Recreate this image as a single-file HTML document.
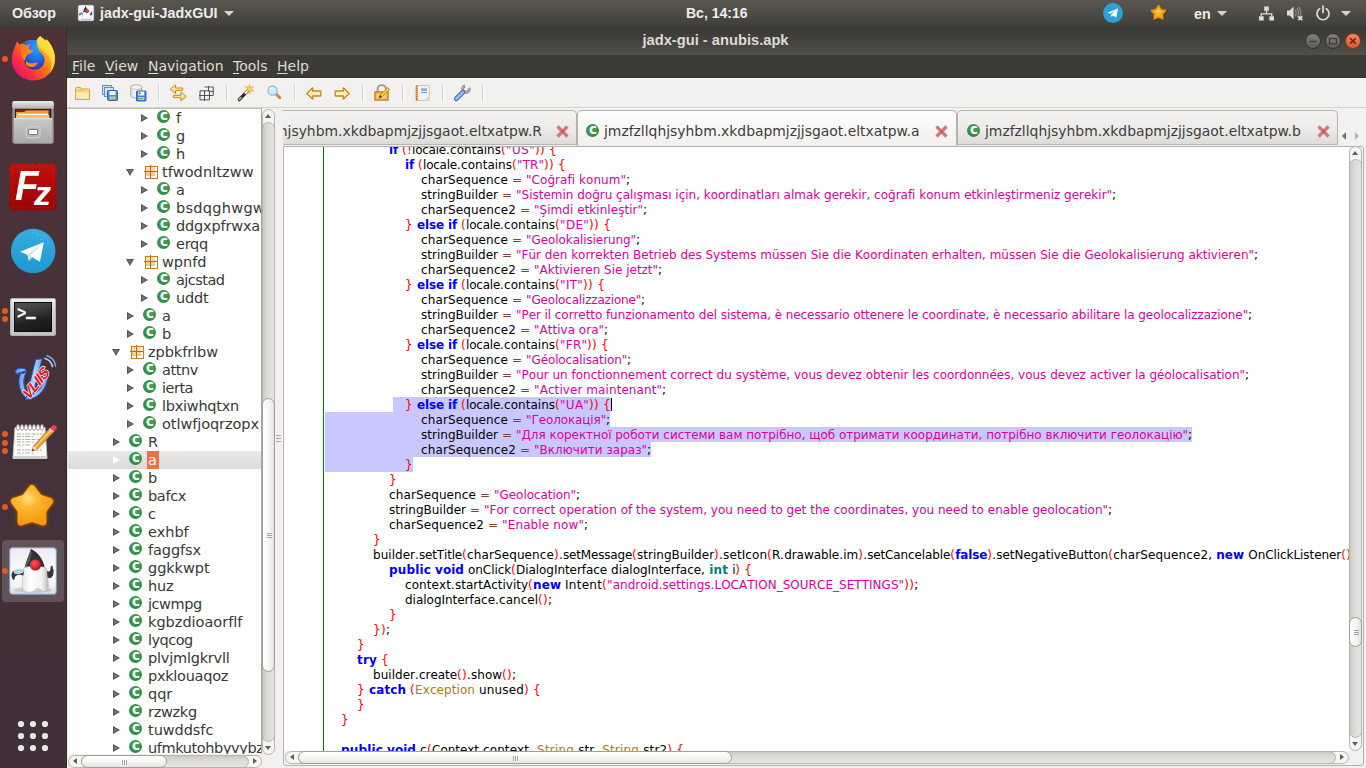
<!DOCTYPE html>
<html lang="en">
<head>
<meta charset="utf-8">
<title>jadx-gui - anubis.apk</title>
<style>
*{box-sizing:border-box;margin:0;padding:0}
html,body{width:1366px;height:768px;overflow:hidden;background:#f2f1f0}
body{position:relative;font-family:"DejaVu Sans","Liberation Sans",sans-serif;font-size:14px;color:#3c3c3c}
.abs,.abs>*{position:absolute}
svg{display:block;overflow:visible}
/* ---------- top panel ---------- */
#panel{left:0;top:0;width:1366px;height:27px;background:linear-gradient(#59574f,#514f48 35%,#45443e 75%,#3f3e39);color:#f2f1ef}
#panel .t{top:0;height:27px;line-height:26px;font-family:"Liberation Sans","DejaVu Sans",sans-serif;font-size:14.3px;font-weight:bold;white-space:nowrap;color:#eeeeec}
.caret{width:0;height:0;border-left:5px solid transparent;border-right:5px solid transparent;border-top:5px solid #d6d5d1}
/* ---------- dock ---------- */
#dock{left:0;top:27px;width:67px;height:741px;background:linear-gradient(#4d3238,#48323a 35%,#43313a 70%,#42313a);border-right:1px solid #39292d}
.dot{width:6px;height:6px;border-radius:3px;background:#e55a1f;left:2px}
/* ---------- window chrome ---------- */
#titlebar{left:67px;top:27px;width:1299px;height:28px;background:linear-gradient(#393834,#3d3c38 20%,#46453f 60%,#514f49)}
#titlebar .title{left:0;width:1299px;top:0;height:27px;line-height:26px;text-align:center;font-family:"Liberation Sans","DejaVu Sans",sans-serif;font-weight:bold;font-size:14.7px;color:#dfdbd2;text-indent:-2px}
.wb{width:16px;height:16px;border-radius:8px;top:6px;border:1px solid #32312d;background:linear-gradient(#807f79,#5e5d58)}
#menubar{left:67px;top:55px;width:1299px;height:23px;background:#3c3b37;color:#dfdbd2;border-bottom:1px solid #2f2e2b}
#menubar span{top:0;height:23px;line-height:22px;font-size:14px;white-space:nowrap}
#menubar u{text-decoration:underline;text-underline-offset:2px}
#toolbar{left:67px;top:78px;width:1299px;height:30px;background:#f2f1f0;border-bottom:1px solid #d6d3ce;box-shadow:inset 0 1px 0 #fdfdfd}
#toolbar .sep{top:7px;width:1px;height:16px;background:#d3d0cb;border-right:1px solid #fbfbfa;box-sizing:content-box}
/* ---------- tree ---------- */
#tree{left:67px;top:108px;width:195px;height:646px;background:#fff;overflow:hidden;border-top:1px solid #c2beb8;border-right:1px solid #aaa79f;border-left:1px solid #e9e7e4}
#tree .row{left:0;width:194px;height:18px}
#tree .row.sel{background:linear-gradient(#e9e8e7,#dcdbda)}
#tree .nm{top:0;height:18px;line-height:18px;font-size:14.5px;color:#383838;white-space:nowrap;padding:0 1px;margin-left:-1px}
#tree .row.sel .nm{background:#ee7043;color:#fff;margin-left:-1px;padding:0 2px 0 1px}
#tree .ic{top:1px;width:13px;height:13px}
.ci{display:block;position:absolute;left:0;top:0;width:13px;height:13px;border-radius:7px;background:radial-gradient(circle at 50% 40%,#4aa65a,#2e8b45 70%,#257a3a);font-style:normal}
.ci b{position:absolute;left:.5px;top:0;width:13px;height:13px;line-height:13.5px;text-align:center;font-family:"DejaVu Sans","Liberation Sans",sans-serif;font-size:10px;font-weight:bold;color:#fff;text-shadow:0 0 .5px #fff}
.pk{display:block;position:absolute;left:0;top:1px;width:13px;height:13px;background:
 linear-gradient(#b4661f,#b4661f) 6px 0/1px 13px no-repeat,
 linear-gradient(#b4661f,#b4661f) 0 6px/13px 1px no-repeat,
 linear-gradient(#fbe3a8,#f3c77a) 2px 2px/9px 9px no-repeat;
 }
.pk:after{content:"";position:absolute;left:1px;top:1px;width:11px;height:11px;border:1px solid #c47a2c}
.ar{top:5px;width:0;height:0;border-top:4px solid transparent;border-bottom:4px solid transparent;border-left:7px solid #555;text-decoration:none}
.ar:after{content:"";position:absolute;left:-6px;top:-2px;width:0;height:0;border-top:2px solid transparent;border-bottom:2px solid transparent;border-left:4px solid #777}
.ar.dn{top:6px;border-left:4px solid transparent;border-right:4px solid transparent;border-top:7px solid #555;border-bottom:0;margin-left:-1px}
.ar.dn:after{left:-2px;top:-6px;border-left:2px solid transparent;border-right:2px solid transparent;border-top:4px solid #777;border-bottom:0}
.row.sel .ar{border-left-color:#fff}.row.sel .ar:after{border-left-color:#fff}
/* ---------- scrollbars (Ambiance GTK2 look) ---------- */
.vsb{width:13px;background:linear-gradient(90deg,#cfcdc9,#dddbd8 30%,#e7e6e3);border-radius:7px;border:1px solid #b3b0a9}
.hsb{height:13px;background:linear-gradient(#cfcdc9,#dddbd8 30%,#e7e6e3);border-radius:7px;border:1px solid #b3b0a9}
.vth{width:13px;left:-1px;border:1px solid #a5a29b;border-radius:7px;background:linear-gradient(90deg,#fefefe,#f3f2f1 70%,#e5e4e2)}
.hth{height:13px;top:-1px;border:1px solid #a5a29b;border-radius:7px;background:linear-gradient(#fefefe,#f3f2f1 70%,#e5e4e2)}
.sbtn{background:#f4f3f2}
.tri{width:0;height:0}
.sb>*,.sb .vth>*,.sb .hth>*{position:absolute}
.sbo{border:1px solid #b7b4ad;border-radius:7px;background:#f6f5f4}
.vtr{border:1px solid #b7b4ad;border-radius:7px;background:linear-gradient(90deg,#cbc9c5,#dcdad7 35%,#e6e5e2)}
.htr{border:1px solid #b7b4ad;border-radius:7px;background:linear-gradient(#cbc9c5,#dcdad7 35%,#e6e5e2)}
.vth{border:1px solid #a29f98;border-radius:7px;background:linear-gradient(90deg,#ffffff,#f4f3f2 60%,#e4e3e1)}
.hth{border:1px solid #a29f98;border-radius:7px;background:linear-gradient(#ffffff,#f4f3f2 60%,#e4e3e1)}
.gh{width:5px;height:1px;background:#aaa7a0}
.gv{width:1px;height:5px;background:#aaa7a0}
.tu{width:0;height:0;border-left:3.5px solid transparent;border-right:3.5px solid transparent;border-bottom:4px solid #5e5d5a}
.td{width:0;height:0;border-left:3.5px solid transparent;border-right:3.5px solid transparent;border-top:4px solid #5e5d5a}
.tl{width:0;height:0;border-top:3.5px solid transparent;border-bottom:3.5px solid transparent;border-right:4px solid #5e5d5a}
.tr{width:0;height:0;border-top:3.5px solid transparent;border-bottom:3.5px solid transparent;border-left:4px solid #5e5d5a}
#tree .row>*{position:absolute}
/* ---------- tabs ---------- */
#tabs{left:283px;top:108px;width:1083px;height:40px}
.tab{top:2px;height:35px;border-bottom:1px solid #b8b4af !important;border:1px solid #b5b2ab;border-bottom:0;border-radius:5px 5px 0 0;background:linear-gradient(#f4f3f2,#ecebe9 55%,#dddbd8);overflow:hidden;white-space:nowrap}
.tab.act{top:2px;height:36px;border-bottom:0 !important;background:linear-gradient(#fdfdfd,#f6f5f4 60%,#f1f0ee);z-index:3}
.tab .tx{top:0;height:34px;line-height:41px;font-size:13.9px;color:#3c3c3c}
.tab.act .tx{line-height:41px}
.tab .ci{top:13px}
.tab.act .ci{top:13px}
.tab svg{top:14px}
.tab.act svg{top:14px}
#pane{left:283px;top:146px;width:1081px;height:620px;border:1px solid #b5b2ab;border-radius:0 3px 3px 3px;background:#f2f1f0}
/* ---------- code ---------- */
#code{left:284px;top:147px;width:1065px;height:604px;background:#fff;overflow:hidden;font-family:"DejaVu Sans","Liberation Sans",sans-serif;font-size:12px;color:#000}
#code .gl{left:39px;top:0;width:1px;height:605px;background:#008000}
#code .ln{height:15px;line-height:15px;white-space:pre;font-kerning:none;font-variant-ligatures:none}
#code .ln a{color:inherit;text-decoration:none}
#code .ln b{color:#0000ff;font-weight:bold}
#code .ln b.ty{color:#008080}
#code .ln i{color:#ff0000;font-style:normal}
#code .ln q{color:#dc009c;quotes:none}
#code .ln q:before,#code .ln q:after{content:none}
#code .ln u{color:#804040;text-decoration:none}
#code .ln em{color:#ad8000;font-style:normal}
#code .ln mark{background:none;color:inherit;display:inline-block;height:15px;position:relative;z-index:0}
#code .ln mark:before{content:"";position:absolute;left:0;right:0;top:-1px;height:15px;background:#c8c8ff;z-index:-1}
#code .cur{display:inline-block;position:static;width:1px;height:13px;background:#000;vertical-align:-2px;text-decoration:none}
</style>
</head>
<body>
<!-- ======================= GNOME top panel ======================= -->
<div id="panel" class="abs">
  <span class="t" style="left:12px;line-height:27px">Обзор</span>
  <svg style="left:78px;top:5px" width="16" height="16" viewBox="0 0 16 16">
    <rect x=".3" y=".3" width="15.400" height="15.400" rx="1.500" fill="#f4f4fa" stroke="#d9dcec" stroke-width=".6"/>
    <path d="M7.500 1C8.200 3.500 10.800 5 11.600 7.600L4.800 8C5 5.500 6.600 3.400 7.500 1Z" fill="#2f3436"/>
    <path d="M4.600 7.400C6.500 6.800 10 6.800 11.800 7.400L12.400 13.600C11.500 14.600 10.400 14.400 9.800 13.600C9.200 13 8.600 13 8.100 13.600C7.400 14.600 6.200 14.600 5.600 13.600C5.200 13.200 4.600 13.400 4.200 13.800Z" fill="#f7f7f7" stroke="#c9c9c9" stroke-width=".3"/>
    <circle cx="8.900" cy="5.800" r="1.900" fill="#f0353f"/><path d="M7.300 7.600C8 8.600 9.600 8.600 10.300 7.600Z" fill="#1c1c1c"/>
    <path d="M4.600 8C3 7.400 1.400 8 1.200 9.500C1.200 10.600 2 10.600 2.400 9.800C3 9.200 3.800 9.300 4.600 9.600Z" fill="#222"/><circle cx="2.700" cy="7.900" r="1" fill="#9cc8f4"/>
    <path d="M12 8.400C13 8.700 13.400 8 13.500 6.900C13.700 6.400 14.200 6.500 14.200 7.100C14.400 8.600 14 9.900 13 10.400L12.200 10.200Z" fill="#222"/>
    <path d="M3 14.300C6 15 10 15 13 14.300" stroke="#555" stroke-width=".6" fill="none" opacity=".6"/>
  </svg>
  <span class="t" style="left:100px;line-height:27px">jadx-gui-JadxGUI</span>
  <div class="caret" style="left:224px;top:11px"></div>
  <span class="t" style="left:686px;font-size:14px">Вс, 14:16</span>
  <!-- telegram -->
  <svg style="left:1103px;top:3px" width="20" height="20" viewBox="0 0 20 20"><circle cx="10" cy="10" r="10" fill="#2ea0d9"/><path d="M4.2 9.8 L15 5.4 L13.2 14.8 L10 12.4 L8.4 14 L8.2 11.4 L13 7.2 L7.2 10.8Z" fill="#fff"/></svg>
  <!-- star -->
  <svg style="left:1150px;top:4px" width="17" height="17" viewBox="0 0 17 17"><path d="M8.50 1.60L10.91 5.58L15.44 6.64L12.40 10.17L12.79 14.81L8.50 13.00L4.21 14.81L4.60 10.17L1.56 6.64L6.09 5.58Z" transform="translate(.6 .8)" fill="#2a2a26" stroke="#2a2a26" stroke-width="2.200" stroke-linejoin="round" opacity=".55"/><path d="M8.50 1.60L10.91 5.58L15.44 6.64L12.40 10.17L12.79 14.81L8.50 13.00L4.21 14.81L4.60 10.17L1.56 6.64L6.09 5.58Z" fill="#fbb024" stroke="#e8920e" stroke-width="1.800" stroke-linejoin="round"/><path d="M8.500 3.500L9.800 6.800L13 7.200L8.500 8.800L4 7.200L7.200 6.800Z" fill="#ffd95e" opacity=".85"/></svg>
  <span class="t" style="left:1194px;line-height:28px">en</span>
  <div class="caret" style="left:1217px;top:11px"></div>
  <!-- network -->
  <svg style="left:1259px;top:6px" width="15" height="15" viewBox="0 0 16 15" fill="#dcdbd7"><rect x="5.5" y="0" width="5" height="4.6"/><rect x="0" y="10.4" width="5" height="4.6"/><rect x="11" y="10.4" width="5" height="4.6"/><path d="M7.3 4.6h1.4v2.6h5.6v3.2h-1.4v-1.8h-9.8v1.8h-1.4v-3.2h5.6z"/></svg>
  <!-- volume muted -->
  <svg style="left:1287px;top:6px" width="17" height="15" viewBox="0 0 17 15"><path d="M0 4.6h2.6L6.6 0.6v13L2.6 9.6H0z" fill="#dcdbd7"/><path d="M8.2 3.6c1.2 1.2 1.2 5.4 0 6.600M10 2c2 2.400 2 7.400 0 9.800M11.800 .8c2.600 3 2.600 9.400 0 12.200" stroke="#8d8b85" stroke-width="1.300" fill="none"/><rect x="10.800" y="9.600" width="5.400" height="5.200" fill="#4b4943"/><path d="M11.400 10.200l3.800 3.800M15.200 10.200l-3.800 3.800" stroke="#dcdbd7" stroke-width="1.900"/></svg>
  <!-- power -->
  <svg style="left:1315px;top:5px" width="16" height="16" viewBox="0 0 16 16" fill="none" stroke="#dcdbd7" stroke-width="1.7" stroke-linecap="round"><path d="M4.6 3.8a6 6 0 1 0 6.8 0"/><path d="M8 1v6.6"/></svg>
  <div class="caret" style="left:1341px;top:11px"></div>
</div>
<!-- ======================= window title bar ======================= -->
<div id="titlebar" class="abs">
  <div class="title">jadx-gui - anubis.apk</div>
  <div class="wb" style="left:1238px"><svg width="14" height="14" viewBox="0 0 14 14"><path d="M3.5 7.5h7" stroke="#3c3b37" stroke-width="1.4"/></svg></div>
  <div class="wb" style="left:1258px"><svg width="14" height="14" viewBox="0 0 14 14"><rect x="3.5" y="4.5" width="7" height="5.4" fill="none" stroke="#3c3b37" stroke-width="1.2"/></svg></div>
  <div class="wb" style="left:1278px;background:linear-gradient(#f08763,#e1552b);border-color:#8e3517"><svg width="14" height="14" viewBox="0 0 14 14"><path d="M4.2 4.2l5.6 5.6M9.8 4.2l-5.6 5.6" stroke="#5b220e" stroke-width="1.5"/></svg></div>
</div>
<!-- ======================= menu bar ======================= -->
<div id="menubar" class="abs">
  <span style="left:5px"><u>F</u>ile</span>
  <span style="left:38px"><u>V</u>iew</span>
  <span style="left:81px"><u>N</u>avigation</span>
  <span style="left:166px"><u>T</u>ools</span>
  <span style="left:210px"><u>H</u>elp</span>
</div>
<!-- ======================= Ubuntu dock ======================= -->
<div id="dock" class="abs">
  <!-- firefox : abs (11..55 , 36..81) -> rel top 9 -->
  <div class="dot" style="top:29px"></div>
  <svg style="left:11px;top:9px" width="45" height="45" viewBox="0 0 45 45">
    <defs>
      <linearGradient id="ffg" x1="0.1" y1="0.85" x2="0.9" y2="0.1"><stop offset="0" stop-color="#e2137c"/><stop offset=".22" stop-color="#fb2f42"/><stop offset=".48" stop-color="#ff6a1a"/><stop offset=".72" stop-color="#ffa317"/><stop offset=".9" stop-color="#ffd83a"/><stop offset="1" stop-color="#fff45e"/></linearGradient>
      <radialGradient id="ffb" cx="60%" cy="25%" r="80%"><stop offset="0" stop-color="#1fa2ff"/><stop offset=".5" stop-color="#1f6fef"/><stop offset=".85" stop-color="#2b3fb8"/><stop offset="1" stop-color="#3a2a8c"/></radialGradient>
      <linearGradient id="ffh" x1="0" y1="0" x2="1" y2="1"><stop offset="0" stop-color="#ff6a1f"/><stop offset="1" stop-color="#ff9a14"/></linearGradient>
    </defs>
    <path d="M29.300.3C31.500 2 33.500 3.500 35.200 5C35.600 4.200 35.600 3.600 35.400 3C38 5.500 40 8.500 41.400 12C43.500 16 44.200 20.500 43.800 25.300C43 36 34 44.500 22.800 44.500C10.500 44.500.8 35.500.8 23.500C.8 19.500 1.700 16 3.200 12.800C3.600 11.300 4.200 10 4.700 8.800C5 7.500 5.800 6.200 6.700 5.300C7 6.500 7.500 7.600 8.200 8.500C9.500 8 10.500 7.800 11.500 7.600C14 4.800 19 3.500 25.800 4.200C26.200 2.800 27.500 1.300 29.300.3Z" fill="url(#ffg)"/>
    <path d="M11.500 7.600C15 4.500 20.500 3.600 25.800 4.200C25.600 7 26 9.800 26.600 12C27.500 14.300 28.800 15.800 29.700 16.700C31.200 18 32.500 19.500 33.200 21.500C33.900 24 33.600 27 32 29.500C30 32.500 26.500 34 22.500 33.600C18 33.200 14.500 30 13.500 26C12.800 22 13.500 17 14.500 14C13.500 11.500 12.500 9.500 11.500 7.600Z" fill="url(#ffb)"/>
    <path d="M8.200 8.500C10 7.800 13 8 15.500 9C17 8.800 18.500 8.300 19.800 7.800C18.800 9.200 18 10.800 17.600 12.400C18.500 13.600 20.300 13.900 22.200 14.300C21.800 15.800 20.800 17 19.200 17.600C17.600 18 16.200 18.600 15.400 20C14.500 21.600 14 23 13.800 24.500C11 22 9.500 18 10 14C9 12 8.500 10 8.200 8.500Z" fill="url(#ffh)"/>
    <path d="M15.400 25.300C17 26.800 19 27.600 21.500 27.300C23.500 27 25.200 26.600 26.800 26.400C26.200 28.600 24.500 30.300 22 30.900C19.500 31.400 17 30.600 15.400 29C14.600 27.800 14.800 26.300 15.400 25.300Z" fill="#ff8a16"/>
    <path d="M29.300.3C31.500 2 33.500 3.500 35.200 5C35.600 4.200 35.600 3.600 35.400 3C38 5.500 40 8.500 41.400 12C43.500 16 44.200 20.500 43.800 25.300C43.400 30 41.500 34 38.500 37.500C41 32.500 41.200 27 38.800 22C37 18.500 33.500 16.500 30.500 13.800C27.500 11 26 7 26.200 4.200C26.600 2.800 27.500 1.300 29.300.3Z" fill="#ffe43f" opacity=".75"/>
  </svg>
  <!-- files cabinet : abs (12..54 , 101..144) -> rel top 74 -->
  <svg style="left:12px;top:74px" width="42" height="43" viewBox="0 0 42 43">
    <defs><linearGradient id="cab" x1="0" y1="0" x2="0" y2="1"><stop offset="0" stop-color="#c8c8c6"/><stop offset="1" stop-color="#a9a9a7"/></linearGradient><linearGradient id="lid" x1="0" y1="0" x2="0" y2="1"><stop offset="0" stop-color="#e4e4e2"/><stop offset="1" stop-color="#b4b4b2"/></linearGradient></defs>
    <rect x=".3" y=".3" width="41.500" height="42.300" rx="2.200" fill="#8f8f8d"/>
    <rect x=".3" y=".3" width="41.500" height="7.400" rx="2" fill="url(#lid)"/><rect x="1" y=".4" width="40" height="1" fill="#f2f2f0"/>
    <rect x="3" y="7.800" width="36.300" height="9.600" fill="#2a2622"/>
    <rect x="4" y="8.600" width="34" height="3.500" fill="#8a1c0c"/><path d="M4 11H12L14 9.500H36.500V17.400H4Z" fill="#f2a233"/><rect x="5.800" y="12.800" width="30.500" height="1.200" fill="#fffdf6"/><rect x="4" y="14.200" width="33.500" height="3.200" fill="#f6c264"/>
    <rect x="1.800" y="17.200" width="38.600" height="25.200" rx="1.200" fill="url(#cab)"/><rect x="2" y="17.200" width="38.200" height="1" fill="#ececea"/>
    <rect x="14.300" y="25.800" width="13.700" height="11" rx="2" fill="#b7b7b5" stroke="#d6d6d4" stroke-width="1"/>
    <rect x="16.600" y="28.500" width="9" height="5.100" rx=".8" fill="#f8f8f6" stroke="#5c5c5a" stroke-width=".8"/>
  </svg>
  <!-- filezilla : abs (9..57 , 163..211) -> rel top 136 -->
  <svg style="left:9px;top:136px" width="48" height="48" viewBox="0 0 48 48"><defs><linearGradient id="fzg" x1="0" y1="0" x2="0" y2="1"><stop offset="0" stop-color="#c40f0c"/><stop offset="1" stop-color="#9a0403"/></linearGradient></defs><rect width="48" height="48" fill="url(#fzg)"/><rect x="3.500" y="3.500" width="41" height="41" fill="none" stroke="#d8302a" stroke-width=".8" stroke-dasharray="1 2" opacity=".7"/><g fill="#47323a"><circle cx="3" cy="0" r="1.700"/><circle cx="3" cy="48" r="1.700"/><circle cx="0" cy="3" r="1.700"/><circle cx="48" cy="3" r="1.700"/><circle cx="9" cy="0" r="1.700"/><circle cx="9" cy="48" r="1.700"/><circle cx="0" cy="9" r="1.700"/><circle cx="48" cy="9" r="1.700"/><circle cx="15" cy="0" r="1.700"/><circle cx="15" cy="48" r="1.700"/><circle cx="0" cy="15" r="1.700"/><circle cx="48" cy="15" r="1.700"/><circle cx="21" cy="0" r="1.700"/><circle cx="21" cy="48" r="1.700"/><circle cx="0" cy="21" r="1.700"/><circle cx="48" cy="21" r="1.700"/><circle cx="27" cy="0" r="1.700"/><circle cx="27" cy="48" r="1.700"/><circle cx="0" cy="27" r="1.700"/><circle cx="48" cy="27" r="1.700"/><circle cx="33" cy="0" r="1.700"/><circle cx="33" cy="48" r="1.700"/><circle cx="0" cy="33" r="1.700"/><circle cx="48" cy="33" r="1.700"/><circle cx="39" cy="0" r="1.700"/><circle cx="39" cy="48" r="1.700"/><circle cx="0" cy="39" r="1.700"/><circle cx="48" cy="39" r="1.700"/><circle cx="45" cy="0" r="1.700"/><circle cx="45" cy="48" r="1.700"/><circle cx="0" cy="45" r="1.700"/><circle cx="48" cy="45" r="1.700"/><rect x="-1" y="-1" width="2.500" height="2.500"/><rect x="46.500" y="-1" width="2.500" height="2.500"/><rect x="-1" y="46.500" width="2.500" height="2.500"/><rect x="46.500" y="46.500" width="2.500" height="2.500"/></g></svg>
  <div style="left:15px;top:139px;width:26px;height:40px;line-height:40px;font-family:'Liberation Sans','DejaVu Sans',sans-serif;font-weight:bold;font-style:italic;font-size:42px;color:#fff;transform:scaleX(.92);transform-origin:0 0">F</div>
  <div style="left:34px;top:146px;width:20px;height:40px;line-height:40px;font-family:'Liberation Sans','DejaVu Sans',sans-serif;font-weight:bold;font-style:italic;font-size:34px;color:#fff">z</div>
  <!-- telegram : centre abs (33,251) r22 -> rel top 202 -->
  <svg style="left:11px;top:202px" width="45" height="45" viewBox="0 0 45 45"><defs><linearGradient id="tg" x1="0" y1="0" x2="0" y2="1"><stop offset="0" stop-color="#35aee2"/><stop offset="1" stop-color="#2096cf"/></linearGradient></defs><circle cx="22.200" cy="22" r="22.200" fill="url(#tg)"/><path d="M9 22.700L32.800 13.300L28.900 32.800L21.100 28.200L18 31.700L16.400 25.800Z" fill="#fff"/><path d="M16.400 25.800L18 31.700L19 27.200L32.800 13.300Z" fill="#d3e4f1"/><path d="M18 31.700L21.100 28.200L19 27.200Z" fill="#b5cfe3"/><g fill="#63d8e8" opacity=".8"><circle cx="18.500" cy="3.500" r=".6"/><circle cx="22" cy="3.800" r=".6"/><circle cx="25.500" cy="4" r=".6"/><circle cx="27.500" cy="5.800" r=".6"/><circle cx="30.500" cy="6" r=".6"/><circle cx="32.500" cy="7" r=".6"/><circle cx="35" cy="8" r=".6"/><circle cx="25.500" cy="8" r=".6"/><circle cx="30.500" cy="10" r=".6"/><circle cx="33.500" cy="10" r=".6"/><circle cx="36.500" cy="11" r=".6"/><circle cx="38.500" cy="13" r=".6"/></g></svg>
  <!-- terminal : abs (10..56 , 298..335) -> rel top 271 -->
  <div class="dot" style="top:281px"></div><div class="dot" style="top:289px"></div>
  <div style="left:10px;top:271px;width:46px;height:38px;background:linear-gradient(#efefed,#d6d6d4 30%,#c3c3c1);border:1px solid #b0b0ae;border-radius:2px"></div>
  <div style="left:14px;top:275px;width:38px;height:30px;background:linear-gradient(165deg,#555 0%,#3c3c3c 35%,#222 60%,#151515);border:1px solid #0c0c0c"></div>
  <div style="left:17px;top:272px;width:12px;height:26px;font-family:'DejaVu Sans Mono','Liberation Mono',monospace;font-weight:bold;font-size:20px;line-height:26px;color:#f4f4f4;transform:scaleX(.8);transform-origin:0 0">&gt;</div>
  <div style="left:26px;top:271px;width:12px;height:24px;font-family:'DejaVu Sans Mono','Liberation Mono',monospace;font-weight:bold;font-size:16px;line-height:24px;color:#f4f4f4;text-shadow:0 .6px 0 #f4f4f4">_</div>
  <!-- VLIIS : abs (14..54 , 355..400) -> rel top 328 -->
  <svg style="left:14px;top:328px" width="41" height="46" viewBox="0 0 41 46">
    <defs><linearGradient id="vl" x1="0" y1="0" x2="1" y2="0"><stop offset="0" stop-color="#5e93ea"/><stop offset=".5" stop-color="#b4d2f9"/><stop offset="1" stop-color="#6a9cee"/></linearGradient></defs>
    <path d="M1 16.500C2 14 4.500 13 7.500 13.200C10 13.400 12 14 12.800 16.500C11 16 9 16.200 7.500 17.500C5.500 20 4.500 24 5 28.500C5.600 34 8 39.500 12.500 43.500C18 44.500 24 41.500 28 36.500C32 31.500 34 25.500 33.500 19L29.500 21C30 26 28.500 31 25.500 34.500C22.500 38 18.500 40 14.500 40C11.500 37 10 32.500 9.800 28C9.600 23.500 10.500 20 12.800 16.500L9 18.500L5 17.500L3.500 19.500Z" fill="url(#vl)" stroke="#2352cf" stroke-width="1" stroke-linejoin="round"/>
    <path d="M21.800 4.500L28.200 3.800L17.500 44.500L11.500 44.500Z" fill="url(#vl)" stroke="#2352cf" stroke-width="1" stroke-linejoin="round"/>
    <path d="M31 3.500C35 4.500 37.500 7.500 38.500 11.500" fill="none" stroke="#b9d6fa" stroke-width="1.600" stroke-linecap="round"/><path d="M33 .8C38 2.500 41 6.500 41.500 11" fill="none" stroke="#7aa8f0" stroke-width="1.600" stroke-linecap="round"/>
    <text x="0" y="0" transform="translate(14.500 46) rotate(-52) skewX(-18)" font-family="Liberation Sans, DejaVu Sans, sans-serif" font-weight="bold" font-size="15" fill="#f0121c" stroke="#ffffff" stroke-width="1.300" paint-order="stroke" letter-spacing="-.7">VLIIS</text>
  </svg>
  <!-- text editor : abs (13..57 , 423..459) -> rel top 396 -->
  <div class="dot" style="top:404px"></div><div class="dot" style="top:413px"></div><div class="dot" style="top:421px"></div>
  <svg style="left:12px;top:394px" width="46" height="40" viewBox="0 0 46 40">
    <path d="M3 6.500H33L35 37H1Z" fill="#fbfbfa" stroke="#c9c9c7"/>
    <path d="M1 35H35L35.200 38H.8Z" fill="#d0d0ce"/>
    <g stroke="#b4b4b2" stroke-width="1.100" stroke-dasharray="4 1.200 2 1 5 1.500"><path d="M5 13H32M5 15.500H21M5 18.500H31M5 21H22M5 24H18M5 29H30M5 32H22"/></g>
    <g fill="#fdfdfd" stroke="#8a8a88" stroke-width=".8" transform="translate(0 1)"><ellipse cx="6" cy="5.500" rx="1.500" ry="3"/><ellipse cx="10" cy="5.500" rx="1.500" ry="3"/><ellipse cx="14" cy="5.500" rx="1.500" ry="3"/><ellipse cx="18" cy="5.500" rx="1.500" ry="3"/><ellipse cx="22" cy="5.500" rx="1.500" ry="3"/><ellipse cx="26" cy="5.500" rx="1.500" ry="3"/><ellipse cx="30" cy="5.500" rx="1.500" ry="3"/></g>
    <path d="M20 30L21.500 25L38 7L42 10.500L25 28.500Z" fill="#f0a030" stroke="#b56a12" stroke-width=".8"/><path d="M23 26.500L39.500 8.500" stroke="#fbd28a" stroke-width="1.300"/>
    <path d="M38 7L40.500 4.500Q42.500 3.500 44 5Q45.500 6.500 44.500 8L42 10.500Z" fill="#e8484e" stroke="#b02a30" stroke-width=".6"/><path d="M37 8.200L41 11.700L42 10.500L38 7Z" fill="#c9c9c7"/>
    <path d="M20 30L21.500 25L25 28.500Z" fill="#f6dcae"/><path d="M20 30L20.700 27.700L22.300 29.200Z" fill="#222"/>
  </svg>
  <!-- star : abs (9..55 , 483..526) -> rel top 456 -->
  <div class="dot" style="top:477px"></div>
  <svg style="left:8px;top:455px" width="48" height="48" viewBox="0 0 48 48"><defs><radialGradient id="st" cx="38%" cy="30%" r="75%"><stop offset="0" stop-color="#ffe27a"/><stop offset=".35" stop-color="#fdb932"/><stop offset="1" stop-color="#f59a10"/></radialGradient><filter id="stb" x="-20%" y="-20%" width="140%" height="140%"><feGaussianBlur stdDeviation="1"/></filter></defs><path d="M24.0 6.5L30.8 15.7L41.6 19.3L34.9 28.6L34.9 40.0L24.0 36.5L13.1 40.0L13.1 28.6L6.4 19.3L17.2 15.7Z" fill="#9a4e06" stroke="#9a4e06" stroke-width="9.500" stroke-linejoin="round" filter="url(#stb)" opacity=".9"/><path d="M24.0 6.5L30.8 15.7L41.6 19.3L34.9 28.6L34.9 40.0L24.0 36.5L13.1 40.0L13.1 28.6L6.4 19.3L17.2 15.7Z" fill="url(#st)" stroke="url(#st)" stroke-width="7" stroke-linejoin="round"/></svg>
  <!-- jadx (duke) active : highlight abs (2..64 , 540..602) -> rel top 513 -->
  <div style="left:2px;top:513px;width:62px;height:62px;border-radius:4px;background:#625358"></div>
  <div class="dot" style="top:541px"></div>
  <svg style="left:9px;top:520px" width="48" height="48" viewBox="0 0 48 48">
    <defs><linearGradient id="dk" x1="0" y1="0" x2="0" y2="1"><stop offset="0" stop-color="#ebebf5"/><stop offset=".55" stop-color="#fbfbfd"/><stop offset=".8" stop-color="#f4f4f4"/><stop offset="1" stop-color="#d9d9d9"/></linearGradient>
    <radialGradient id="dn" cx="42%" cy="35%" r="65%"><stop offset="0" stop-color="#ff5a5a"/><stop offset=".6" stop-color="#e02a30"/><stop offset="1" stop-color="#a80f18"/></radialGradient>
    <linearGradient id="db" x1="0" y1="0" x2="1" y2="0"><stop offset="0" stop-color="#e4e4e4"/><stop offset=".3" stop-color="#ffffff"/><stop offset=".75" stop-color="#f3f3f3"/><stop offset="1" stop-color="#b9b9b9"/></linearGradient></defs>
    <rect x=".6" y=".6" width="46.800" height="46.800" rx="3.500" fill="url(#dk)" stroke="#7f96c2" stroke-width="1.100"/>
    <ellipse cx="24" cy="43" rx="19" ry="3" fill="#9a9a9a" opacity=".35"/>
    <path d="M22 2.100C25.500 3.500 29.500 7 32 11C33.800 14 35 17 35.500 20L15.500 21.500C16.500 17 18 13 19.500 9C20.500 6.500 21.300 4.200 22 2.100Z" fill="#2e3032"/>
    <path d="M22 2.100C23 6 22.500 10 20.500 14.500C19.500 17 18 19 16 21.500L15.500 21.500C16.500 17 18 13 19.500 9C20.500 6.500 21.300 4.200 22 2.100Z" fill="#55585b"/>
    <path d="M14.500 21C20 18.500 31 18.500 37.500 21C39 27 39.600 35 39.300 42C38.500 45 34 45.500 32 43C30.500 41 28.500 40.500 27 42C25 45 20 46 16.500 44.500C14 43.500 13 41.500 13.200 39C13 33 13.500 26 14.500 21Z" fill="url(#db)" stroke="#b4b4b4" stroke-width=".5"/>
    <circle cx="26.400" cy="18" r="5.600" fill="url(#dn)"/>
    <path d="M15 23C10 21.500 4.500 22.500 2.800 26C2 28.500 3 32 4.600 33C5.800 33.200 5.600 31 6.200 29.500C8 27.500 11.500 27.500 14.500 28.500Z" fill="#35373a"/>
    <ellipse cx="9.800" cy="24.400" rx="4.800" ry="2.100" fill="#9ac6f3" stroke="#e8e8e8" stroke-width=".9" transform="rotate(-8 9.800 24.400)"/><ellipse cx="10.200" cy="24.600" rx="1.600" ry=".7" fill="#ffffff"/>
    <path d="M38 24C40 25 41.200 24.500 41.500 22C41.500 20 42 18.800 42.800 18.800C43.800 18.800 43.800 20.200 43.800 21.500C44.500 22 44.800 23 44.600 24.500C44.800 27.500 43.500 30.500 41 31.200L38.500 30.500Z" fill="#35373a"/>
  </svg>
  <!-- show applications grid -->
  <svg style="left:17px;top:693px" width="32" height="32" viewBox="0 0 32 32" fill="#ebe9e6"><circle cx="4" cy="4" r="3.100"/><circle cx="16" cy="4" r="3.100"/><circle cx="28" cy="4" r="3.100"/><circle cx="4" cy="16" r="3.100"/><circle cx="16" cy="16" r="3.100"/><circle cx="28" cy="16" r="3.100"/><circle cx="4" cy="28" r="3.100"/><circle cx="16" cy="28" r="3.100"/><circle cx="28" cy="28" r="3.100"/></svg>
</div>
<!-- ======================= toolbar ======================= -->
<div id="toolbar" class="abs">
  <!-- open folder -->
  <svg style="left:8px;top:9px" width="15" height="13" viewBox="0 0 15 13"><path d="M.5 12.5V1.2Q.5.5 1.2.5H5.6L6.8 2H13.6Q14.5 2 14.5 2.9V12.5Z" fill="#f9d98c" stroke="#e2a43a"/><path d="M1.5 5.5H13.5V11.5H1.5Z" fill="#fce9b3"/><path d="M1.5 3.5H8" stroke="#f0bb58"/></svg>
  <!-- save all -->
  <svg style="left:35px;top:7px" width="16" height="16" viewBox="0 0 16 16"><rect x=".5" y=".5" width="9" height="9" fill="#cfe0f3" stroke="#5b8fd0"/><rect x="2.5" y="2.5" width="9" height="9" fill="#cfe0f3" stroke="#5b8fd0"/><rect x="5.5" y="5.5" width="10" height="10" rx="1" fill="#4f8fdf" stroke="#2f63b3"/><rect x="7.5" y="6" width="6" height="4" fill="#f1f6fc"/><rect x="7.5" y="11.5" width="6" height="3" fill="#b9d36a"/></svg>
  <!-- save to db -->
  <svg style="left:63px;top:6px" width="17" height="18" viewBox="0 0 17 18"><defs><linearGradient id="cyl" x1="0" y1="0" x2="1" y2="0"><stop offset="0" stop-color="#dcdcdc"/><stop offset=".4" stop-color="#f6f6f6"/><stop offset="1" stop-color="#cfcfcf"/></linearGradient></defs><path d="M.6 3.200C.6.200 11.800.200 11.800 3.200V11.800C11.800 14.800.6 14.800.6 11.800Z" fill="url(#cyl)" stroke="#a9a9a9" stroke-width=".9"/><ellipse cx="6.200" cy="3.200" rx="5.600" ry="2.200" fill="#f4f4f4" stroke="#b4b4b4" stroke-width=".7"/><rect x="6.500" y="7" width="9.500" height="10" rx=".8" fill="#3f7fdc" stroke="#2a5db0" stroke-width=".9"/><rect x="8.300" y="7.500" width="6" height="4" fill="#f3f7fd"/><rect x="9" y="8.200" width="1.600" height="2" fill="#3f7fdc"/><rect x="8.300" y="13" width="6" height="3" fill="#c6d96a"/><rect x="9.200" y="14" width="4" height="1" fill="#8aa83a"/></svg>
  <div class="sep" style="left:91px"></div>
  <!-- sync arrows -->
  <svg style="left:103px;top:6px" width="17" height="18" viewBox="0 0 17 18" stroke="#c8861c" stroke-width="1" stroke-linejoin="round"><defs><linearGradient id="arw" x1="0" y1="0" x2="0" y2="1"><stop offset="0" stop-color="#fff6d6"/><stop offset="1" stop-color="#f7cf6a"/></linearGradient></defs><path d="M.3 5.200L5.600.9V4H12.700V6.400H5.600V9.600Z" fill="url(#arw)"/><path d="M16.200 12.500L10.900 8.200V11.300H3.400V13.700H10.900V16.800Z" fill="url(#arw)"/></svg>
  <!-- flatten packages grid -->
  <svg style="left:132px;top:7px" width="16" height="17" viewBox="0 0 16 17"><rect x="5.500" y="2" width="8.700" height="8.500" fill="#eaf3fb"/><rect x="1" y="5.800" width="9.500" height="9" fill="#eaf3fb"/><g fill="none" stroke="#57524d" stroke-width="1"><path d="M9.500 1V6M5.500 2H14.200V10.500H10.500M9.500 6.400H15"/><path d="M1 5.800H10.500V14.800H1ZM5.500 5.400V16M0 10.500H11.300"/></g></svg>
  <div class="sep" style="left:159px"></div>
  <!-- wand -->
  <svg style="left:171px;top:6px" width="16" height="17" viewBox="0 0 16 17"><path d="M1.200 15.600L9.600 7" stroke="#2a2a2a" stroke-width="3.200" stroke-linecap="round"/><path d="M7.600 9L9.600 7" stroke="#f4f4f4" stroke-width="2.200" stroke-linecap="round"/><path d="M1.200 15.600L3.200 13.600" stroke="#bdbdbd" stroke-width="1.400" stroke-linecap="round"/><path d="M11.500.5L12.400 3.600L15.600 2.600L13.400 5L15.600 7.400L12.400 6.600L11.500 9.800L10.600 6.600L7.400 7.400L9.600 5L7.400 2.600L10.600 3.600Z" fill="#fbd34e" stroke="#e59a1a" stroke-width=".6"/></svg>
  <!-- magnifier -->
  <svg style="left:200px;top:7px" width="15" height="15" viewBox="0 0 15 15"><path d="M8.800 8.800L12.800 12.800" stroke="#c4873a" stroke-width="2.800" stroke-linecap="round"/><circle cx="5.600" cy="5.600" r="4.600" fill="#d6e9fb" stroke="#8fb9e6" stroke-width="1.300"/><path d="M3 4.600A3 3 0 0 1 6 2.600" stroke="#fff" stroke-width="1.200" fill="none"/></svg>
  <div class="sep" style="left:227px"></div>
  <!-- back / forward -->
  <svg style="left:239px;top:9px" width="16" height="13" viewBox="0 0 16 13" fill="#fdeeb8" stroke="#c48a1c" stroke-width="1.300" stroke-linejoin="round"><path d="M.8 6.500L6.700.8V4H14.800V9H6.700V12.200Z"/></svg>
  <svg style="left:267px;top:9px" width="16" height="13" viewBox="0 0 16 13" fill="#fdeeb8" stroke="#c48a1c" stroke-width="1.300" stroke-linejoin="round"><path d="M15.200 6.500L9.300.8V4H1.200V9H9.300V12.200Z"/></svg>
  <div class="sep" style="left:295px"></div>
  <!-- deobfuscation lock + pencil -->
  <svg style="left:307px;top:6px" width="17" height="17" viewBox="0 0 17 17"><path d="M3.600 8V5.200A4.200 4.200 0 0 1 12 5.200V8" fill="none" stroke="#9c9c9c" stroke-width="2"/><rect x=".8" y="7.800" width="13.400" height="8.400" fill="#f0a63a" stroke="#c57a18"/><rect x="2.500" y="9.500" width="10" height="5" fill="#f9d08b"/><path d="M5 14L6 11L13.600 3.600L15.600 5.600L8 13Z" fill="#f6c453" stroke="#b7731a" stroke-width=".7"/><path d="M5 14L6 11L8 13Z" fill="#4b2e12"/></svg>
  <div class="sep" style="left:335px"></div>
  <!-- log viewer notebook -->
  <svg style="left:348px;top:7px" width="15" height="16" viewBox="0 0 15 16"><rect x="1.500" y=".5" width="13" height="15" rx="1" fill="#f3f2f0" stroke="#c9c6c0"/><rect x=".7" y=".5" width="2" height="15" fill="#c9712c"/><path d="M0 2.500H2.500M0 4.500H2.500M0 6.500H2.500M0 8.500H2.500M0 10.500H2.500M0 12.500H2.500" stroke="#e7c3a0" stroke-width=".7"/><rect x="6" y="3.500" width="6" height="2.200" fill="#6fa0dc"/><path d="M6 7.500H12" stroke="#6fa0dc" stroke-width="1.200"/><path d="M14.500 10L9 15.500H14.500Z" fill="#dcdad6"/></svg>
  <div class="sep" style="left:375px"></div>
  <!-- preferences wrench -->
  <svg style="left:387px;top:6px" width="17" height="17" viewBox="0 0 17 17"><path d="M8.600 8.400L10.400 6.600" stroke="#8f8f8f" stroke-width="3"/><circle cx="12" cy="5" r="3.300" fill="none" stroke="#7b7b7b" stroke-width="2.800" stroke-dasharray="15.200 5.500" transform="rotate(-18 12 5)"/><circle cx="12" cy="5" r="3.300" fill="none" stroke="#b5b5b5" stroke-width="1.400" stroke-dasharray="15.200 5.500" transform="rotate(-18 12 5)"/><path d="M2.300 14.700L8.800 8.200" stroke="#3a6fc2" stroke-width="4.800" stroke-linecap="round"/><path d="M2.300 14.700L8.800 8.200" stroke="#93bbee" stroke-width="2.800" stroke-linecap="round"/></svg>
  <div class="sep" style="left:415px"></div>
</div>
<!-- ======================= class tree ======================= -->
<div id="tree" class="abs">
<div class="row" style="top:0px"><s class="ar" style="left:73px"></s><span class="ic" style="left:89px"><i class="ci"><b>C</b></i></span><span class="nm" style="left:108px">f</span></div>
<div class="row" style="top:18px"><s class="ar" style="left:73px"></s><span class="ic" style="left:89px"><i class="ci"><b>C</b></i></span><span class="nm" style="left:108px">g</span></div>
<div class="row" style="top:36px"><s class="ar" style="left:73px"></s><span class="ic" style="left:89px"><i class="ci"><b>C</b></i></span><span class="nm" style="left:108px">h</span></div>
<div class="row" style="top:54px"><s class="ar dn" style="left:59px"></s><span class="ic" style="left:76px"><i class="pk"></i></span><span class="nm" style="left:94px;letter-spacing:0.082px">tfwodnltzww</span></div>
<div class="row" style="top:72px"><s class="ar" style="left:73px"></s><span class="ic" style="left:89px"><i class="ci"><b>C</b></i></span><span class="nm" style="left:108px">a</span></div>
<div class="row" style="top:90px"><s class="ar" style="left:73px"></s><span class="ic" style="left:89px"><i class="ci"><b>C</b></i></span><span class="nm" style="left:108px;letter-spacing:0.28px">bsdqghwgw</span></div>
<div class="row" style="top:108px"><s class="ar" style="left:73px"></s><span class="ic" style="left:89px"><i class="ci"><b>C</b></i></span><span class="nm" style="left:108px;letter-spacing:-0.18px">ddgxpfrwxa</span></div>
<div class="row" style="top:126px"><s class="ar" style="left:73px"></s><span class="ic" style="left:89px"><i class="ci"><b>C</b></i></span><span class="nm" style="left:108px;letter-spacing:-0.262px">erqq</span></div>
<div class="row" style="top:144px"><s class="ar dn" style="left:59px"></s><span class="ic" style="left:76px"><i class="pk"></i></span><span class="nm" style="left:94px;letter-spacing:-0.033px">wpnfd</span></div>
<div class="row" style="top:162px"><s class="ar" style="left:73px"></s><span class="ic" style="left:89px"><i class="ci"><b>C</b></i></span><span class="nm" style="left:108px;letter-spacing:-0.546px">ajcstad</span></div>
<div class="row" style="top:180px"><s class="ar" style="left:73px"></s><span class="ic" style="left:89px"><i class="ci"><b>C</b></i></span><span class="nm" style="left:108px;letter-spacing:-0.174px">uddt</span></div>
<div class="row" style="top:198px"><s class="ar" style="left:59px"></s><span class="ic" style="left:75px"><i class="ci"><b>C</b></i></span><span class="nm" style="left:94px">a</span></div>
<div class="row" style="top:216px"><s class="ar" style="left:59px"></s><span class="ic" style="left:75px"><i class="ci"><b>C</b></i></span><span class="nm" style="left:94px">b</span></div>
<div class="row" style="top:234px"><s class="ar dn" style="left:45px"></s><span class="ic" style="left:62px"><i class="pk"></i></span><span class="nm" style="left:80px;letter-spacing:-0.064px">zpbkfrlbw</span></div>
<div class="row" style="top:252px"><s class="ar" style="left:59px"></s><span class="ic" style="left:75px"><i class="ci"><b>C</b></i></span><span class="nm" style="left:94px;letter-spacing:-0.406px">attnv</span></div>
<div class="row" style="top:270px"><s class="ar" style="left:59px"></s><span class="ic" style="left:75px"><i class="ci"><b>C</b></i></span><span class="nm" style="left:94px;letter-spacing:-0.497px">ierta</span></div>
<div class="row" style="top:288px"><s class="ar" style="left:59px"></s><span class="ic" style="left:75px"><i class="ci"><b>C</b></i></span><span class="nm" style="left:94px;letter-spacing:-0.256px">lbxiwhqtxn</span></div>
<div class="row" style="top:306px"><s class="ar" style="left:59px"></s><span class="ic" style="left:75px"><i class="ci"><b>C</b></i></span><span class="nm" style="left:94px;letter-spacing:-0.069px">otlwfjoqrzopx</span></div>
<div class="row" style="top:324px"><s class="ar" style="left:45px"></s><span class="ic" style="left:61px"><i class="ci"><b>C</b></i></span><span class="nm" style="left:80px">R</span></div>
<div class="row sel" style="top:342px"><s class="ar" style="left:45px"></s><span class="ic" style="left:61px"><i class="ci"><b>C</b></i></span><span class="nm" style="left:80px">a</span></div>
<div class="row" style="top:360px"><s class="ar" style="left:45px"></s><span class="ic" style="left:61px"><i class="ci"><b>C</b></i></span><span class="nm" style="left:80px">b</span></div>
<div class="row" style="top:378px"><s class="ar" style="left:45px"></s><span class="ic" style="left:61px"><i class="ci"><b>C</b></i></span><span class="nm" style="left:80px;letter-spacing:-0.35px">bafcx</span></div>
<div class="row" style="top:396px"><s class="ar" style="left:45px"></s><span class="ic" style="left:61px"><i class="ci"><b>C</b></i></span><span class="nm" style="left:80px">c</span></div>
<div class="row" style="top:414px"><s class="ar" style="left:45px"></s><span class="ic" style="left:61px"><i class="ci"><b>C</b></i></span><span class="nm" style="left:80px;letter-spacing:-0.01px">exhbf</span></div>
<div class="row" style="top:432px"><s class="ar" style="left:45px"></s><span class="ic" style="left:61px"><i class="ci"><b>C</b></i></span><span class="nm" style="left:80px;letter-spacing:-0.092px">faggfsx</span></div>
<div class="row" style="top:450px"><s class="ar" style="left:45px"></s><span class="ic" style="left:61px"><i class="ci"><b>C</b></i></span><span class="nm" style="left:80px;letter-spacing:-0.065px">ggkkwpt</span></div>
<div class="row" style="top:468px"><s class="ar" style="left:45px"></s><span class="ic" style="left:61px"><i class="ci"><b>C</b></i></span><span class="nm" style="left:80px;letter-spacing:-0.233px">huz</span></div>
<div class="row" style="top:486px"><s class="ar" style="left:45px"></s><span class="ic" style="left:61px"><i class="ci"><b>C</b></i></span><span class="nm" style="left:80px;letter-spacing:-0.451px">jcwmpg</span></div>
<div class="row" style="top:504px"><s class="ar" style="left:45px"></s><span class="ic" style="left:61px"><i class="ci"><b>C</b></i></span><span class="nm" style="left:80px;letter-spacing:-0.006px">kgbzdioaorflf</span></div>
<div class="row" style="top:522px"><s class="ar" style="left:45px"></s><span class="ic" style="left:61px"><i class="ci"><b>C</b></i></span><span class="nm" style="left:80px;letter-spacing:-0.529px">lyqcog</span></div>
<div class="row" style="top:540px"><s class="ar" style="left:45px"></s><span class="ic" style="left:61px"><i class="ci"><b>C</b></i></span><span class="nm" style="left:80px;letter-spacing:-0.217px">plvjmlgkrvll</span></div>
<div class="row" style="top:558px"><s class="ar" style="left:45px"></s><span class="ic" style="left:61px"><i class="ci"><b>C</b></i></span><span class="nm" style="left:80px;letter-spacing:-0.276px">pxklouaqoz</span></div>
<div class="row" style="top:576px"><s class="ar" style="left:45px"></s><span class="ic" style="left:61px"><i class="ci"><b>C</b></i></span><span class="nm" style="left:80px;letter-spacing:-0.058px">qqr</span></div>
<div class="row" style="top:594px"><s class="ar" style="left:45px"></s><span class="ic" style="left:61px"><i class="ci"><b>C</b></i></span><span class="nm" style="left:80px;letter-spacing:-0.293px">rzwzkg</span></div>
<div class="row" style="top:612px"><s class="ar" style="left:45px"></s><span class="ic" style="left:61px"><i class="ci"><b>C</b></i></span><span class="nm" style="left:80px;letter-spacing:-0.06px">tuwddsfc</span></div>
<div class="row" style="top:630px"><s class="ar" style="left:45px"></s><span class="ic" style="left:61px"><i class="ci"><b>C</b></i></span><span class="nm" style="left:80px;letter-spacing:-0.398px">ufmkutohbyvybz</span></div>
</div>
<!-- ======================= tabs ======================= -->
<div id="pane" class="abs"></div>
<div id="tabs" class="abs">
  <div class="tab abs" style="left:0;width:294px;border-radius:0 5px 0 0;border-left:0"><span class="tx" style="right:34px">jmzfzllqhjsyhbm.xkdbapmjzjjsgaot.eltxatpw.R</span><svg style="left:273px" width="13" height="13" viewBox="0 0 13 13"><path d="M1.5 1.5L11.5 11.5M11.5 1.5L1.500 11.500" stroke="#d8777a" stroke-width="3.200"/><rect x="5" y="5" width="3" height="3" fill="#c95a5e"/></svg></div>
  <div class="tab act abs" style="left:294px;width:380px"><i class="ci" style="left:8px"><b>C</b></i><span class="tx" style="left:26px">jmzfzllqhjsyhbm.xkdbapmjzjjsgaot.eltxatpw.a</span><svg style="left:357px" width="13" height="13" viewBox="0 0 13 13"><path d="M1.5 1.5L11.5 11.5M11.5 1.5L1.500 11.500" stroke="#d8777a" stroke-width="3.200"/><rect x="5" y="5" width="3" height="3" fill="#c95a5e"/></svg></div>
  <div class="tab abs" style="left:674px;width:381px"><i class="ci" style="left:9px"><b>C</b></i><span class="tx" style="left:27px">jmzfzllqhjsyhbm.xkdbapmjzjjsgaot.eltxatpw.b</span><svg style="left:359px" width="13" height="13" viewBox="0 0 13 13"><path d="M1.5 1.5L11.5 11.5M11.5 1.5L1.500 11.500" stroke="#d8777a" stroke-width="3.200"/><rect x="5" y="5" width="3" height="3" fill="#c95a5e"/></svg></div>
  <i class="abs" style="left:1059px;top:24px;width:0;height:0;border-top:4px solid transparent;border-bottom:4px solid transparent;border-right:4px solid #6f6e6a"></i>
  <i class="abs" style="left:1072px;top:24px;width:0;height:0;border-top:4px solid transparent;border-bottom:4px solid transparent;border-left:4px solid #b4b2ad"></i>
</div>
<!-- ======================= code viewer ======================= -->
<div id="code" class="abs">
<div class="gl"></div>
<div class="ln" style="top:-4px;left:105px"><b style="letter-spacing:-0.167px">if</b><a style="letter-spacing:0.186px"> </a><i style="letter-spacing:0.318px">(</i><u style="letter-spacing:0.189px">!</u><a style="letter-spacing:-0.224px">locale</a><a style="letter-spacing:0.186px">.</a><a style="letter-spacing:0.026px">contains</a><i style="letter-spacing:0.318px">(</i><q style="letter-spacing:0.390px">"US"</q><i style="letter-spacing:0.318px">)</i><i style="letter-spacing:0.318px">)</i><a style="letter-spacing:0.186px"> </a><i style="letter-spacing:0.365px">{</i></div>
<div class="ln" style="top:11px;left:121px"><b style="letter-spacing:-0.167px">if</b><a style="letter-spacing:0.186px"> </a><i style="letter-spacing:0.318px">(</i><a style="letter-spacing:-0.224px">locale</a><a style="letter-spacing:0.186px">.</a><a style="letter-spacing:0.026px">contains</a><i style="letter-spacing:0.318px">(</i><q style="letter-spacing:0.073px">"TR"</q><i style="letter-spacing:0.318px">)</i><i style="letter-spacing:0.318px">)</i><a style="letter-spacing:0.186px"> </a><i style="letter-spacing:0.365px">{</i></div>
<div class="ln" style="top:26px;left:137px"><a style="letter-spacing:0.110px">charSequence</a><a style="letter-spacing:0.186px"> </a><u style="letter-spacing:-0.055px">=</u><a style="letter-spacing:0.186px"> </a><q style="letter-spacing:0.051px">"Coğrafi konum"</q><a style="letter-spacing:-0.043px">;</a></div>
<div class="ln" style="top:41px;left:137px"><a style="letter-spacing:0.009px">stringBuilder</a><a style="letter-spacing:0.186px"> </a><u style="letter-spacing:-0.055px">=</u><a style="letter-spacing:0.186px"> </a><q style="letter-spacing:-0.009px">"Sistemin doğru çalışması için, koordinatları almak gerekir, coğrafi konum etkinleştirmeniz gerekir"</q><a style="letter-spacing:-0.043px">;</a></div>
<div class="ln" style="top:56px;left:137px"><a style="letter-spacing:0.130px">charSequence2</a><a style="letter-spacing:0.186px"> </a><u style="letter-spacing:-0.055px">=</u><a style="letter-spacing:0.186px"> </a><q style="letter-spacing:0.034px">"Şimdi etkinleştir"</q><a style="letter-spacing:-0.043px">;</a></div>
<div class="ln" style="top:71px;left:121px"><i style="letter-spacing:0.365px">}</i><a style="letter-spacing:0.186px"> </a><b style="letter-spacing:-0.133px">else</b><a style="letter-spacing:0.186px"> </a><b style="letter-spacing:-0.167px">if</b><a style="letter-spacing:0.186px"> </a><i style="letter-spacing:0.318px">(</i><a style="letter-spacing:-0.224px">locale</a><a style="letter-spacing:0.186px">.</a><a style="letter-spacing:0.026px">contains</a><i style="letter-spacing:0.318px">(</i><q style="letter-spacing:0.285px">"DE"</q><i style="letter-spacing:0.318px">)</i><i style="letter-spacing:0.318px">)</i><a style="letter-spacing:0.186px"> </a><i style="letter-spacing:0.365px">{</i></div>
<div class="ln" style="top:86px;left:137px"><a style="letter-spacing:0.110px">charSequence</a><a style="letter-spacing:0.186px"> </a><u style="letter-spacing:-0.055px">=</u><a style="letter-spacing:0.186px"> </a><q style="letter-spacing:-0.080px">"Geolokalisierung"</q><a style="letter-spacing:-0.043px">;</a></div>
<div class="ln" style="top:101px;left:137px"><a style="letter-spacing:0.009px">stringBuilder</a><a style="letter-spacing:0.186px"> </a><u style="letter-spacing:-0.055px">=</u><a style="letter-spacing:0.186px"> </a><q style="letter-spacing:-0.008px">"Für den korrekten Betrieb des Systems müssen Sie die Koordinaten erhalten, müssen Sie die Geolokalisierung aktivieren"</q><a style="letter-spacing:-0.043px">;</a></div>
<div class="ln" style="top:116px;left:137px"><a style="letter-spacing:0.130px">charSequence2</a><a style="letter-spacing:0.186px"> </a><u style="letter-spacing:-0.055px">=</u><a style="letter-spacing:0.186px"> </a><q style="letter-spacing:-0.017px">"Aktivieren Sie jetzt"</q><a style="letter-spacing:-0.043px">;</a></div>
<div class="ln" style="top:131px;left:121px"><i style="letter-spacing:0.365px">}</i><a style="letter-spacing:0.186px"> </a><b style="letter-spacing:-0.133px">else</b><a style="letter-spacing:0.186px"> </a><b style="letter-spacing:-0.167px">if</b><a style="letter-spacing:0.186px"> </a><i style="letter-spacing:0.318px">(</i><a style="letter-spacing:-0.224px">locale</a><a style="letter-spacing:0.186px">.</a><a style="letter-spacing:0.026px">contains</a><i style="letter-spacing:0.318px">(</i><q style="letter-spacing:0.273px">"IT"</q><i style="letter-spacing:0.318px">)</i><i style="letter-spacing:0.318px">)</i><a style="letter-spacing:0.186px"> </a><i style="letter-spacing:0.365px">{</i></div>
<div class="ln" style="top:146px;left:137px"><a style="letter-spacing:0.110px">charSequence</a><a style="letter-spacing:0.186px"> </a><u style="letter-spacing:-0.055px">=</u><a style="letter-spacing:0.186px"> </a><q style="letter-spacing:-0.172px">"Geolocalizzazione"</q><a style="letter-spacing:-0.043px">;</a></div>
<div class="ln" style="top:161px;left:137px"><a style="letter-spacing:0.009px">stringBuilder</a><a style="letter-spacing:0.186px"> </a><u style="letter-spacing:-0.055px">=</u><a style="letter-spacing:0.186px"> </a><q style="letter-spacing:-0.072px">"Per il corretto funzionamento del sistema, è necessario ottenere le coordinate, è necessario abilitare la geolocalizzazione"</q><a style="letter-spacing:-0.043px">;</a></div>
<div class="ln" style="top:176px;left:137px"><a style="letter-spacing:0.130px">charSequence2</a><a style="letter-spacing:0.186px"> </a><u style="letter-spacing:-0.055px">=</u><a style="letter-spacing:0.186px"> </a><q style="letter-spacing:0.009px">"Attiva ora"</q><a style="letter-spacing:-0.043px">;</a></div>
<div class="ln" style="top:191px;left:121px"><i style="letter-spacing:0.365px">}</i><a style="letter-spacing:0.186px"> </a><b style="letter-spacing:-0.133px">else</b><a style="letter-spacing:0.186px"> </a><b style="letter-spacing:-0.167px">if</b><a style="letter-spacing:0.186px"> </a><i style="letter-spacing:0.318px">(</i><a style="letter-spacing:-0.224px">locale</a><a style="letter-spacing:0.186px">.</a><a style="letter-spacing:0.026px">contains</a><i style="letter-spacing:0.318px">(</i><q style="letter-spacing:0.180px">"FR"</q><i style="letter-spacing:0.318px">)</i><i style="letter-spacing:0.318px">)</i><a style="letter-spacing:0.186px"> </a><i style="letter-spacing:0.365px">{</i></div>
<div class="ln" style="top:206px;left:137px"><a style="letter-spacing:0.110px">charSequence</a><a style="letter-spacing:0.186px"> </a><u style="letter-spacing:-0.055px">=</u><a style="letter-spacing:0.186px"> </a><q style="letter-spacing:-0.115px">"Géolocalisation"</q><a style="letter-spacing:-0.043px">;</a></div>
<div class="ln" style="top:221px;left:137px"><a style="letter-spacing:0.009px">stringBuilder</a><a style="letter-spacing:0.186px"> </a><u style="letter-spacing:-0.055px">=</u><a style="letter-spacing:0.186px"> </a><q style="letter-spacing:-0.005px">"Pour un fonctionnement correct du système, vous devez obtenir les coordonnées, vous devez activer la géolocalisation"</q><a style="letter-spacing:-0.043px">;</a></div>
<div class="ln" style="top:236px;left:137px"><a style="letter-spacing:0.130px">charSequence2</a><a style="letter-spacing:0.186px"> </a><u style="letter-spacing:-0.055px">=</u><a style="letter-spacing:0.186px"> </a><q style="letter-spacing:0.077px">"Activer maintenant"</q><a style="letter-spacing:-0.043px">;</a></div>
<div class="ln" style="top:251px;left:109px;padding-left:12px"><mark style="margin-left:-12px;padding-left:12px"><i style="letter-spacing:0.365px">}</i><a style="letter-spacing:0.186px"> </a><b style="letter-spacing:-0.133px">else</b><a style="letter-spacing:0.186px"> </a><b style="letter-spacing:-0.167px">if</b><a style="letter-spacing:0.186px"> </a><i style="letter-spacing:0.318px">(</i><a style="letter-spacing:-0.224px">locale</a><a style="letter-spacing:0.186px">.</a><a style="letter-spacing:0.026px">contains</a><i style="letter-spacing:0.318px">(</i><q style="letter-spacing:0.242px">"UA"</q><i style="letter-spacing:0.318px">)</i><i style="letter-spacing:0.318px">)</i><a style="letter-spacing:0.186px"> </a><i style="letter-spacing:0.365px">{</i></mark><s class="cur"></s></div>
<div class="ln" style="top:266px;left:41px;padding-left:96px"><mark style="margin-left:-96px;padding-left:96px"><a style="letter-spacing:0.110px">charSequence</a><a style="letter-spacing:0.186px"> </a><u style="letter-spacing:-0.055px">=</u><a style="letter-spacing:0.186px"> </a><q style="letter-spacing:-0.118px">"Геолокація"</q><a style="letter-spacing:-0.043px">;</a></mark></div>
<div class="ln" style="top:281px;left:41px;padding-left:96px"><mark style="margin-left:-96px;padding-left:96px"><a style="letter-spacing:0.009px">stringBuilder</a><a style="letter-spacing:0.186px"> </a><u style="letter-spacing:-0.055px">=</u><a style="letter-spacing:0.186px"> </a><q style="letter-spacing:-0.036px">"Для коректної роботи системи вам потрібно, щоб отримати координати, потрібно включити геолокацію"</q><a style="letter-spacing:-0.043px">;</a></mark></div>
<div class="ln" style="top:296px;left:41px;padding-left:96px"><mark style="margin-left:-96px;padding-left:96px"><a style="letter-spacing:0.130px">charSequence2</a><a style="letter-spacing:0.186px"> </a><u style="letter-spacing:-0.055px">=</u><a style="letter-spacing:0.186px"> </a><q style="letter-spacing:0.008px">"Включити зараз"</q><a style="letter-spacing:-0.043px">;</a></mark></div>
<div class="ln" style="top:311px;left:41px;padding-left:80px"><mark style="margin-left:-80px;padding-left:80px"><i style="letter-spacing:0.365px">}</i></mark></div>
<div class="ln" style="top:326px;left:105px"><i style="letter-spacing:0.365px">}</i></div>
<div class="ln" style="top:341px;left:105px"><a style="letter-spacing:0.110px">charSequence</a><a style="letter-spacing:0.186px"> </a><u style="letter-spacing:-0.055px">=</u><a style="letter-spacing:0.186px"> </a><q style="letter-spacing:-0.052px">"Geolocation"</q><a style="letter-spacing:-0.043px">;</a></div>
<div class="ln" style="top:356px;left:105px"><a style="letter-spacing:0.009px">stringBuilder</a><a style="letter-spacing:0.186px"> </a><u style="letter-spacing:-0.055px">=</u><a style="letter-spacing:0.186px"> </a><q style="letter-spacing:0.017px">"For correct operation of the system, you need to get the coordinates, you need to enable geolocation"</q><a style="letter-spacing:-0.043px">;</a></div>
<div class="ln" style="top:371px;left:105px"><a style="letter-spacing:0.130px">charSequence2</a><a style="letter-spacing:0.186px"> </a><u style="letter-spacing:-0.055px">=</u><a style="letter-spacing:0.186px"> </a><q style="letter-spacing:0.126px">"Enable now"</q><a style="letter-spacing:-0.043px">;</a></div>
<div class="ln" style="top:386px;left:89px"><i style="letter-spacing:0.365px">}</i></div>
<div class="ln" style="top:401px;left:89px"><a style="letter-spacing:0.025px">builder</a><a style="letter-spacing:0.186px">.</a><a style="letter-spacing:-0.178px">setTitle</a><i style="letter-spacing:0.318px">(</i><a style="letter-spacing:0.110px">charSequence</a><i style="letter-spacing:0.318px">)</i><a style="letter-spacing:0.186px">.</a><a style="letter-spacing:-0.193px">setMessage</a><i style="letter-spacing:0.318px">(</i><a style="letter-spacing:0.009px">stringBuilder</a><i style="letter-spacing:0.318px">)</i><a style="letter-spacing:0.186px">.</a><a style="letter-spacing:0.082px">setIcon</a><i style="letter-spacing:0.318px">(</i><a style="letter-spacing:-0.338px">R</a><a style="letter-spacing:0.186px">.</a><a style="letter-spacing:-0.051px">drawable</a><a style="letter-spacing:0.186px">.</a><a style="letter-spacing:-0.012px">im</a><i style="letter-spacing:0.318px">)</i><a style="letter-spacing:0.186px">.</a><a style="letter-spacing:-0.129px">setCancelable</a><i style="letter-spacing:0.318px">(</i><b style="letter-spacing:-0.143px">false</b><i style="letter-spacing:0.318px">)</i><a style="letter-spacing:0.186px">.</a><a style="letter-spacing:-0.023px">setNegativeButton</a><i style="letter-spacing:0.318px">(</i><a style="letter-spacing:0.130px">charSequence2</a><a style="letter-spacing:0.186px">,</a><a style="letter-spacing:0.186px"> </a><b style="letter-spacing:0.077px">new</b><a style="letter-spacing:0.186px"> </a><a style="letter-spacing:-0.062px">OnClickListener</a><i style="letter-spacing:0.318px">(</i><i style="letter-spacing:0.318px">)</i><a style="letter-spacing:0.186px"> </a><i style="letter-spacing:0.365px">{</i></div>
<div class="ln" style="top:416px;left:105px"><b style="letter-spacing:0.156px">public</b><a style="letter-spacing:0.186px"> </a><b style="letter-spacing:0.058px">void</b><a style="letter-spacing:0.186px"> </a><a style="letter-spacing:-0.077px">onClick</a><i style="letter-spacing:0.318px">(</i><a style="letter-spacing:-0.063px">DialogInterface</a><a style="letter-spacing:0.186px"> </a><a style="letter-spacing:-0.021px">dialogInterface</a><a style="letter-spacing:0.186px">,</a><a style="letter-spacing:0.186px"> </a><b class="ty" style="letter-spacing:0.202px">int</b><a style="letter-spacing:0.186px"> </a><a style="letter-spacing:-0.334px">i</a><i style="letter-spacing:0.318px">)</i><a style="letter-spacing:0.186px"> </a><i style="letter-spacing:0.365px">{</i></div>
<div class="ln" style="top:431px;left:121px"><a style="letter-spacing:0.080px">context</a><a style="letter-spacing:0.186px">.</a>startActivity<i style="letter-spacing:0.318px">(</i><b style="letter-spacing:0.077px">new</b><a style="letter-spacing:0.186px"> </a><a style="letter-spacing:0.243px">Intent</a><i style="letter-spacing:0.318px">(</i><q style="letter-spacing:0.029px">"android.settings.LOCATION_SOURCE_SETTINGS"</q><i style="letter-spacing:0.318px">)</i><i style="letter-spacing:0.318px">)</i><a style="letter-spacing:-0.043px">;</a></div>
<div class="ln" style="top:446px;left:121px"><a style="letter-spacing:-0.021px">dialogInterface</a><a style="letter-spacing:0.186px">.</a><a style="letter-spacing:0.021px">cancel</a><i style="letter-spacing:0.318px">(</i><i style="letter-spacing:0.318px">)</i><a style="letter-spacing:-0.043px">;</a></div>
<div class="ln" style="top:461px;left:105px"><i style="letter-spacing:0.365px">}</i></div>
<div class="ln" style="top:476px;left:89px"><i style="letter-spacing:0.365px">}</i><i style="letter-spacing:0.318px">)</i><a style="letter-spacing:-0.043px">;</a></div>
<div class="ln" style="top:491px;left:73px"><i style="letter-spacing:0.365px">}</i></div>
<div class="ln" style="top:506px;left:73px"><b style="letter-spacing:0.174px">try</b><a style="letter-spacing:0.186px"> </a><i style="letter-spacing:0.365px">{</i></div>
<div class="ln" style="top:521px;left:89px"><a style="letter-spacing:0.025px">builder</a><a style="letter-spacing:0.186px">.</a><a style="letter-spacing:-0.059px">create</a><i style="letter-spacing:0.318px">(</i><i style="letter-spacing:0.318px">)</i><a style="letter-spacing:0.186px">.</a>show<i style="letter-spacing:0.318px">(</i><i style="letter-spacing:0.318px">)</i><a style="letter-spacing:-0.043px">;</a></div>
<div class="ln" style="top:536px;left:73px"><i style="letter-spacing:0.365px">}</i><a style="letter-spacing:0.186px"> </a><b style="letter-spacing:0.079px">catch</b><a style="letter-spacing:0.186px"> </a><i style="letter-spacing:0.318px">(</i><em style="letter-spacing:0.081px">Exception</em><a style="letter-spacing:0.186px"> </a><a style="letter-spacing:0.155px">unused</a><i style="letter-spacing:0.318px">)</i><a style="letter-spacing:0.186px"> </a><i style="letter-spacing:0.365px">{</i></div>
<div class="ln" style="top:551px;left:73px"><i style="letter-spacing:0.365px">}</i></div>
<div class="ln" style="top:566px;left:57px"><i style="letter-spacing:0.365px">}</i></div>
<div class="ln" style="top:581px;left:41px"></div>
<div class="ln" style="top:596px;left:57px"><b style="letter-spacing:0.156px">public</b><a style="letter-spacing:0.186px"> </a><b style="letter-spacing:0.058px">void</b><a style="letter-spacing:0.186px"> </a><a style="letter-spacing:0.402px">c</a><i style="letter-spacing:0.318px">(</i><a style="letter-spacing:-0.032px">Context</a><a style="letter-spacing:0.186px"> </a><a style="letter-spacing:0.080px">context</a><a style="letter-spacing:0.186px">,</a><a style="letter-spacing:0.186px"> </a><em style="letter-spacing:0.198px">String</em><a style="letter-spacing:0.186px"> </a><a style="letter-spacing:0.036px">str</a><a style="letter-spacing:0.186px">,</a><a style="letter-spacing:0.186px"> </a><em style="letter-spacing:0.198px">String</em><a style="letter-spacing:0.186px"> </a><a style="letter-spacing:0.119px">str2</a><i style="letter-spacing:0.318px">)</i><a style="letter-spacing:0.186px"> </a><i style="letter-spacing:0.365px">{</i></div>
</div>
<!-- ======================= scrollbars ======================= -->
<div class="abs sb" style="left:262px;top:109px;width:13px;height:646px"><div class="sbo" style="left:0;top:0;width:13px;height:646px"></div><div class="vtr" style="left:0;top:13px;width:13px;height:620px"></div><div class="vth" style="left:0;top:289px;width:13px;height:274px"><i class="gh" style="left:4px;top:134px"></i><i class="gh" style="left:4px;top:136px"></i><i class="gh" style="left:4px;top:138px"></i></div><i class="tu" style="left:3px;top:5px"></i><i class="td" style="left:3px;top:637px"></i></div>
<div class="abs sb" style="left:68px;top:755px;width:194px;height:13px"><div class="sbo" style="left:0;top:0;width:194px;height:13px"></div><div class="htr" style="left:13px;top:0;width:168px;height:13px"></div><div class="hth" style="left:13px;top:0;width:86px;height:13px"><i class="gv" style="top:4px;left:40px"></i><i class="gv" style="top:4px;left:42px"></i><i class="gv" style="top:4px;left:44px"></i></div><i class="tl" style="top:3px;left:5px"></i><i class="tr" style="top:3px;left:185px"></i></div>
<div class="abs sb" style="left:1349px;top:146px;width:13px;height:605px"><div class="sbo" style="left:0;top:0;width:13px;height:605px"></div><div class="vtr" style="left:0;top:13px;width:13px;height:579px"></div><div class="vth" style="left:0;top:471px;width:13px;height:30px"><i class="gh" style="left:4px;top:12px"></i><i class="gh" style="left:4px;top:14px"></i><i class="gh" style="left:4px;top:16px"></i></div><i class="tu" style="left:3px;top:5px"></i><i class="td" style="left:3px;top:596px"></i></div>
<div class="abs sb" style="left:285px;top:751px;width:1064px;height:13px"><div class="sbo" style="left:0;top:0;width:1064px;height:13px"></div><div class="htr" style="left:13px;top:0;width:1038px;height:13px"></div><div class="hth" style="left:13px;top:0;width:434px;height:13px"><i class="gv" style="top:4px;left:214px"></i><i class="gv" style="top:4px;left:216px"></i><i class="gv" style="top:4px;left:218px"></i></div><i class="tl" style="top:3px;left:5px"></i><i class="tr" style="top:3px;left:1055px"></i></div>
<div class="abs" style="left:276px;top:435px;width:5px;height:7px"><i class="gh" style="left:0;top:0"></i><i class="gh" style="left:0;top:3px"></i><i class="gh" style="left:0;top:6px"></i></div>
</body>
</html>
